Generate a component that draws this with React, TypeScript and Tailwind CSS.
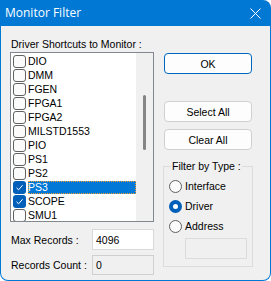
import React from 'react';

const drivers = ['DIO', 'DMM', 'FGEN', 'FPGA1', 'FPGA2', 'MILSTD1553', 'PIO', 'PS1', 'PS2', 'PS3', 'SCOPE', 'SMU1'];
const checked = ['PS3', 'SCOPE'];

const Check = ({ on }: { on: boolean }) =>
  on ? (
    <span className="w-[13px] h-[13px] rounded-[3px] bg-[#005fb8] flex items-center justify-center shrink-0">
      <svg width="9" height="9" viewBox="0 0 9 9">
        <path d="M1.5 4.8 L3.6 6.8 L7.6 2.2" stroke="#ffffff" strokeWidth="1" fill="none" />
      </svg>
    </span>
  ) : (
    <span className="w-[13px] h-[13px] rounded-[3px] border border-[#616161] bg-[#fbfbfb] shrink-0" />
  );

const Radio = ({ on, label }: { on: boolean; label: string }) => (
  <div className="flex items-center h-[20px]">
    {on ? (
      <span className="w-[13px] h-[13px] rounded-full bg-[#005fb8] flex items-center justify-center shrink-0">
        <span className="w-[5px] h-[5px] rounded-full bg-white" />
      </span>
    ) : (
      <span className="w-[13px] h-[13px] rounded-full border border-[#616161] bg-[#fbfbfb] shrink-0" />
    )}
    <span className="ml-[3px]">{label}</span>
  </div>
);

export default function App() {
  return (
    <div
      className="w-[271px] h-[281px] flex flex-col overflow-hidden rounded-tr-[8px] rounded-b-[8px] bg-[#0078d4] text-[10.5px] leading-[14px] text-black"
      style={{ fontFamily: '"Liberation Sans", Arial, sans-serif' }}
    >
      {/* title bar */}
      <div className="h-[26px] flex items-center justify-between pl-[5px] pr-[10px] shrink-0">
        <span className="text-white text-[12px]" style={{ fontFamily: '"Open Sans", sans-serif' }}>
          Monitor Filter
        </span>
        <svg width="11" height="11" viewBox="0 0 11 11">
          <path d="M0.5 0.5 L10.5 10.5 M10.5 0.5 L0.5 10.5" stroke="#ffffff" strokeWidth="1" />
        </svg>
      </div>

      <div className="flex-1 mx-[1px] mb-[1px] bg-[#f0f0f0] rounded-b-[7px] flex pl-[9px]">
        {/* left column */}
        <div className="w-[144px] flex flex-col pt-[11px]">
          <div className="pl-[1px]">Driver Shortcuts to Monitor :</div>
          <div className="mt-[1px] h-[170px] border border-[#828790] bg-white flex">
            <div className="flex-1 overflow-hidden pt-[1px] flex flex-col">
              {drivers.map((d) => {
                const sel = d === 'PS3';
                return (
                  <div key={d} className="h-[14px] flex items-center pl-[2px] shrink-0">
                    <Check on={checked.includes(d)} />
                    <span
                      className={`ml-[2px] flex-1 h-[13px] leading-[13px] ${
                        sel ? 'bg-[#0078d7] text-white outline outline-1 outline-dotted outline-[#f0a030] -outline-offset-1' : ''
                      }`}
                    >
                      {d}
                    </span>
                  </div>
                );
              })}
            </div>
            <div className="w-[17px] bg-[#f0f0f0] flex flex-col items-center pt-[42px]">
              <div className="w-[3px] h-[55px] rounded-full bg-[#858585]" />
            </div>
          </div>

          <div className="mt-[7px] h-[21px] flex items-center justify-between">
            <span className="pl-[1px]">Max Records :</span>
            <div className="w-[62px] h-[21px] bg-white border border-[#d9d9d9] flex items-center pl-[3px]">4096</div>
          </div>
          <div className="mt-[5px] h-[20px] flex items-center justify-between">
            <span className="pl-[1px]">Records Count :</span>
            <div className="w-[62px] h-[20px] bg-[#f0f0f0] border border-[#d0d0d0] flex items-center pl-[3px]">0</div>
          </div>
        </div>

        {/* right column */}
        <div className="w-[88px] ml-[10px] flex flex-col pt-[27px]">
          <button className="h-[21px] rounded-[4px] border-[1.5px] border-[#0067c0] bg-[#fdfdfd] flex items-center justify-center">
            OK
          </button>
          <button className="mt-[27px] h-[21px] rounded-[4px] border border-[#d0d0d0] bg-[#fdfdfd] flex items-center justify-center">
            Select All
          </button>
          <button className="mt-[7px] h-[21px] rounded-[4px] border border-[#d0d0d0] bg-[#fdfdfd] flex items-center justify-center">
            Clear All
          </button>

          {/* group box */}
          <div className="mt-[9px] -mx-[1px] flex flex-col">
            <span className="relative z-10 self-start ml-[8px] px-[1px] h-[14px] bg-[#f0f0f0]">Filter by Type :</span>
            <div className="-mt-[7px] border border-[#dcdcdc] pl-[5px] pt-[9px] pb-[7px]">
              <Radio on={false} label="Interface" />
              <Radio on={true} label="Driver" />
              <Radio on={false} label="Address" />
              <div className="mt-[2px] ml-[16px] w-[62px] h-[21px] bg-[#f0f0f0] border border-[#dcdcdc]" />
            </div>
          </div>
        </div>
      </div>
    </div>
  );
}
